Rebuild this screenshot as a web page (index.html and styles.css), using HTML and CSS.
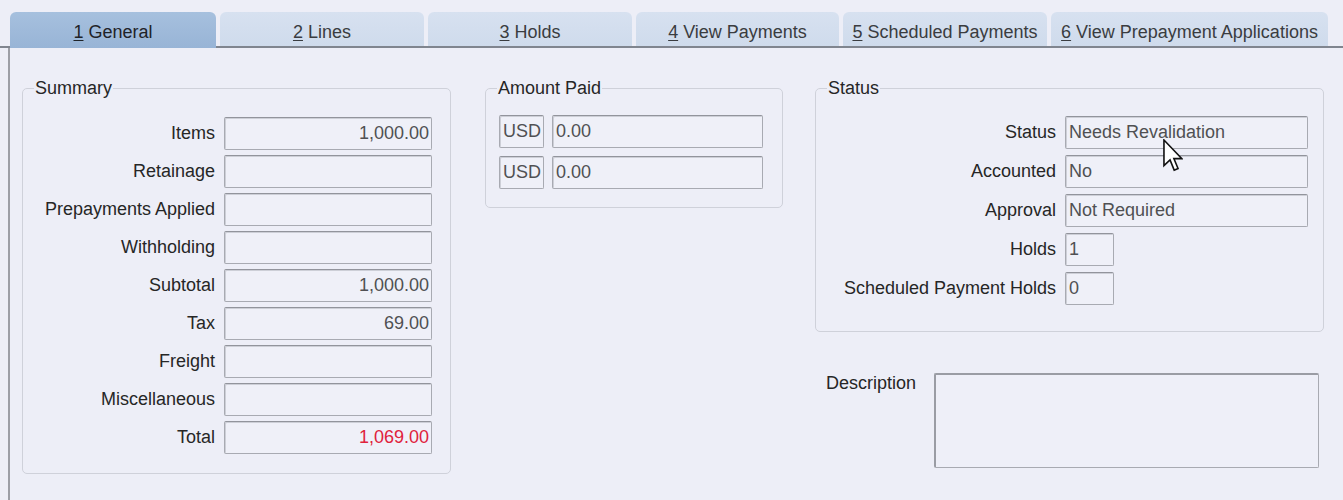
FILE: index.html
```html
<!DOCTYPE html>
<html>
<head>
<meta charset="utf-8">
<link rel="stylesheet" href="styles.css">
</head>
<body>
<div class="window">
  <div class="tabs">
    <div class="tab active w206"><span class="tab-text"><u>1</u> General</span></div>
    <div class="tab w204"><span class="tab-text"><u>2</u> Lines</span></div>
    <div class="tab w204"><span class="tab-text"><u>3</u> Holds</span></div>
    <div class="tab w203"><span class="tab-text"><u>4</u> View Payments</span></div>
    <div class="tab w204"><span class="tab-text"><u>5</u> Scheduled Payments</span></div>
    <div class="tab w277"><span class="tab-text"><u>6</u> View Prepayment Applications</span></div>
  </div>
  <div class="panel">
    <fieldset class="group summary">
      <legend>Summary</legend>
      <div class="form summary-form">
        <span class="lbl">Items</span><div class="field num">1,000.00</div>
        <span class="lbl">Retainage</span><div class="field num"></div>
        <span class="lbl">Prepayments Applied</span><div class="field num"></div>
        <span class="lbl">Withholding</span><div class="field num"></div>
        <span class="lbl">Subtotal</span><div class="field num">1,000.00</div>
        <span class="lbl">Tax</span><div class="field num">69.00</div>
        <span class="lbl">Freight</span><div class="field num"></div>
        <span class="lbl">Miscellaneous</span><div class="field num"></div>
        <span class="lbl">Total</span><div class="field num total">1,069.00</div>
      </div>
    </fieldset>

    <fieldset class="group paid">
      <legend>Amount Paid</legend>
      <div class="form paid-form">
        <div class="field">USD</div><div class="field">0.00</div>
        <div class="field">USD</div><div class="field">0.00</div>
      </div>
    </fieldset>

    <div class="right-col">
      <fieldset class="group status">
        <legend>Status</legend>
        <div class="form status-form">
          <span class="lbl">Status</span><div class="field">Needs Revalidation</div>
          <span class="lbl">Accounted</span><div class="field">No</div>
          <span class="lbl">Approval</span><div class="field">Not Required</div>
          <span class="lbl">Holds</span><div class="field short">1</div>
          <span class="lbl">Scheduled Payment Holds</span><div class="field short">0</div>
        </div>
      </fieldset>
      <div class="desc-row">
        <span class="desc-lbl">Description</span>
        <div class="textarea"></div>
      </div>
    </div>
  </div>
</div>
<svg class="cursor" width="20" height="33" viewBox="0 0 12.5 20.5">
  <path d="M0.6 0.6 L0.6 16.6 L4.4 13 L7 19.4 L9.4 18.4 L6.8 12.2 L11.8 12.2 Z" fill="#ffffff" stroke="#111111" stroke-width="1" stroke-linejoin="miter"/>
</svg>
</body>
</html>
```

FILE: styles.css
```css
html, body {
  margin: 0;
  padding: 0;
}
body {
  width: 1343px;
  height: 500px;
  overflow: hidden;
  background: #edeef7;
  font-family: "Liberation Sans", Arial, sans-serif;
  font-size: 18px;
  color: #262626;
  position: relative;
}
.window {
  display: flex;
  flex-direction: column;
  height: 500px;
}
.tabs {
  display: flex;
  gap: 4px;
  padding: 12px 0 0 10px;
  border-bottom: 2px solid #80858f;
  height: 34px;
}
.tab {
  height: 34px;
  box-sizing: border-box;
  display: flex;
  align-items: center;
  justify-content: center;
  background: linear-gradient(#d7e1f0, #cfdbec);
  border-radius: 6px 6px 0 0;
  color: #3a3c40;
  line-height: 20px;
  padding-top: 6px;
}
.tab-text {
  white-space: nowrap;
}
.tab u {
  text-decoration: underline;
  text-underline-offset: 2px;
  text-decoration-thickness: 1px;
}
.tab.active {
  background: linear-gradient(#a6c0de, #98b4d6);
  height: 36px;
  margin-bottom: -2px;
  color: #1f2328;
  padding-top: 4px;
}
.w206 { width: 206px; }
.w204 { width: 204px; }
.w203 { width: 203px; }
.w277 { width: 277px; }

.panel {
  flex: 1;
  margin-left: 8px;
  border-left: 2px solid #9c9ea6;
  display: flex;
  align-items: flex-start;
  padding-top: 30px;
}
.group {
  margin: 0;
  padding: 0;
  border: 1px solid #cfd1da;
  border-radius: 5px;
  min-inline-size: 0;
  box-sizing: border-box;
}
.group legend {
  margin-left: 11px;
  padding: 0 1px;
  line-height: 20px;
  height: 20px;
  color: #262626;
}
.form {
  display: grid;
  grid-auto-rows: 33px;
  align-items: center;
}
.lbl {
  text-align: right;
  white-space: nowrap;
  color: #262626;
}
.field {
  height: 33px;
  box-sizing: border-box;
  border: 1px solid #a8aab2;
  border-top-color: #92949c;
  border-radius: 2px;
  box-shadow: inset 1px 1px 0 #cdcfd7;
  background: #eff0f8;
  color: #505053;
  line-height: 31px;
  padding: 0 3px;
  white-space: nowrap;
  overflow: hidden;
}
.field.num {
  text-align: right;
  padding-right: 2px;
}
.field.total {
  color: #e0223c;
}

.summary {
  margin-left: 12px;
  width: 429px;
}
.summary-form {
  padding: 19px 18px 19px 12px;
  grid-template-columns: 180px 208px;
  column-gap: 9px;
  row-gap: 5px;
}

.paid {
  margin-left: 34px;
  width: 298px;
}
.paid-form {
  padding: 17px 19px 18px 13px;
  grid-template-columns: 45px 211px;
  column-gap: 8px;
  row-gap: 8px;
}

.right-col {
  margin-left: 32px;
  width: 509px;
  display: flex;
  flex-direction: column;
}
.status {
  width: 509px;
}
.status-form {
  padding: 18px 15px 26px 28px;
  grid-template-columns: 212px 243px;
  column-gap: 9px;
  row-gap: 6px;
}
.field.short {
  width: 49px;
}

.desc-row {
  margin-top: 41px;
  display: flex;
  align-items: flex-start;
}
.desc-lbl {
  width: 108px;
  margin-left: 11px;
  line-height: 20px;
  color: #262626;
}
.textarea {
  width: 385px;
  height: 95px;
  box-sizing: border-box;
  border: 1px solid #a8aab2;
  border-top: 2px solid #9a9ca4;
  border-left: 2px solid #9a9ca4;
  border-radius: 2px;
  background: #eeeff8;
}

.cursor {
  position: absolute;
  left: 1163px;
  top: 139px;
  pointer-events: none;
}
```
